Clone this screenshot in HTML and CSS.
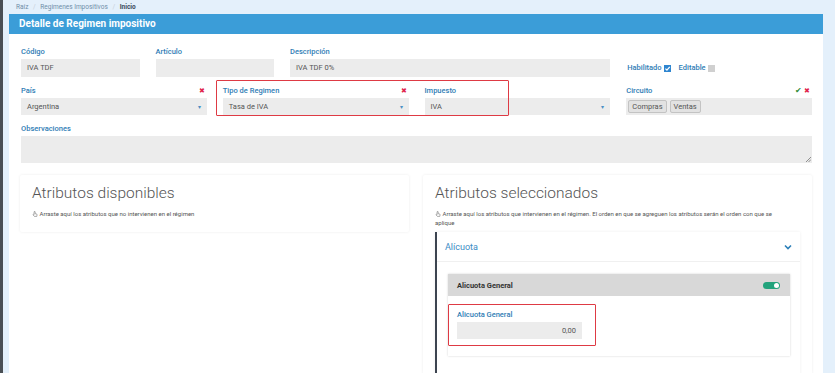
FILE: index.html
```html
<!DOCTYPE html>
<html lang="es">
<head>
    <meta charset="UTF-8">
    <title>Detalle de Regimen impositivo</title>
    <link rel="stylesheet" href="styles.css">
</head>
<body>
<div class="app">
    <div class="breadcrumb">
        <span class="crumb">Raíz</span>
        <span class="sep">/</span>
        <span class="crumb">Regimenes Impositivos</span>
        <span class="sep">/</span>
        <span class="crumb actual">Inicio</span>
    </div>

    <div class="panel">
        <div class="panel-title">Detalle de Regimen impositivo</div>
        <div class="panel-body">

            <div class="fila">
                <div class="campo span2">
                    <div class="etiqueta">Código</div>
                    <div class="entrada">IVA TDF</div>
                </div>
                <div class="campo span2">
                    <div class="etiqueta">Artículo</div>
                    <div class="entrada"></div>
                </div>
                <div class="campo span5">
                    <div class="etiqueta">Descripción</div>
                    <div class="entrada">IVA TDF 0%</div>
                </div>
                <div class="campo span3 checks">
                    <span class="etiqueta">Habilitado</span>
                    <span class="check marcado">
                        <svg width="7" height="7" viewBox="0 0 10 10"><path d="M2 5.2 L4.2 7.4 L8.2 2.6" fill="none" stroke="#fff" stroke-width="1.8"/></svg>
                    </span>
                    <span class="etiqueta editable">Editable</span>
                    <span class="check"></span>
                </div>
            </div>

            <div class="fila marca-contenedor">
                <div class="campo span3">
                    <div class="etiqueta linea">País <span class="quitar">✖</span></div>
                    <div class="entrada select">Argentina <span class="caret">▾</span></div>
                </div>
                <div class="campo span3">
                    <div class="etiqueta linea">Tipo de Regimen <span class="quitar">✖</span></div>
                    <div class="entrada select">Tasa de IVA <span class="caret">▾</span></div>
                </div>
                <div class="campo span3">
                    <div class="etiqueta linea">Impuesto</div>
                    <div class="entrada select">IVA <span class="caret">▾</span></div>
                </div>
                <div class="campo span3">
                    <div class="etiqueta linea">Circuito
                        <span class="acciones"><span class="ok">✔</span> <span class="quitar">✖</span></span>
                    </div>
                    <div class="entrada tags">
                        <span class="tag">Compras</span>
                        <span class="tag">Ventas</span>
                    </div>
                </div>
                <div class="marca marca-regimen"></div>
            </div>

            <div class="fila">
                <div class="campo span12">
                    <div class="etiqueta">Observaciones</div>
                    <div class="entrada area">
                        <svg class="grip" width="6" height="6" viewBox="0 0 6 6"><path d="M6 1 L1 6 M6 3.5 L3.5 6" stroke="#777" stroke-width="0.8"/></svg>
                    </div>
                </div>
            </div>

            <div class="atributos">
                <div class="tarjeta">
                    <h3>Atributos disponibles</h3>
                    <p class="ayuda">
                        <svg class="mano" width="6" height="6" viewBox="0 0 10 10"><path d="M3.5 6 V1.6 a0.9 0.9 0 0 1 1.8 0 V4.5 l2.4 0.6 a1 1 0 0 1 0.8 1.1 L8 9 H4 L1.8 6.6 a0.8 0.8 0 0 1 1.2 -1 Z" fill="none" stroke="#666" stroke-width="0.9"/></svg>
                        Arraste aquí los atributos que no intervienen en el régimen
                    </p>
                </div>

                <div class="tarjeta seleccionados">
                    <h3>Atributos seleccionados</h3>
                    <p class="ayuda">
                        <svg class="mano" width="6" height="6" viewBox="0 0 10 10"><path d="M3.5 6 V1.6 a0.9 0.9 0 0 1 1.8 0 V4.5 l2.4 0.6 a1 1 0 0 1 0.8 1.1 L8 9 H4 L1.8 6.6 a0.8 0.8 0 0 1 1.2 -1 Z" fill="none" stroke="#666" stroke-width="0.9"/></svg>
                        Arraste aquí los atributos que intervienen en el régimen. El orden en que se agreguen los atributos serán el orden con que se aplique
                    </p>

                    <div class="acordeon">
                        <div class="acordeon-cab">
                            <span>Alícuota</span>
                            <svg width="8" height="6" viewBox="0 0 8 6"><path d="M1 1.5 L4 4.5 L7 1.5" fill="none" stroke="#2b7fb8" stroke-width="1.6"/></svg>
                        </div>
                        <div class="acordeon-cuerpo">
                            <div class="subtarjeta">
                                <div class="subtarjeta-cab">
                                    <span>Alicuota General</span>
                                    <span class="interruptor"><span class="perilla"></span></span>
                                </div>
                                <div class="subtarjeta-cuerpo marca-contenedor">
                                    <div class="etiqueta">Alicuota General</div>
                                    <div class="entrada numero">0,00</div>
                                    <div class="marca marca-alicuota"></div>
                                </div>
                            </div>
                        </div>
                    </div>
                </div>
            </div>

        </div>
    </div>
</div>
</body>
</html>
```

FILE: styles.css
```css
body {
    margin: 0;
    font-family: Roboto, "Liberation Sans", Arial, sans-serif;
    background: #e4f0fb;
    height: 373px;
    overflow: hidden;
}

.app {
    border-left: 3px solid #4a4f55;
    padding-left: 6px;
    padding-right: 12px;
    height: 373px;
    box-sizing: border-box;
}

.breadcrumb {
    height: 14px;
    line-height: 14px;
    padding-left: 7px;
    font-size: 6.5px;
    color: #6f8ea8;
}

.sep {
    color: #c4cfd8;
    margin: 0 3px;
}

.crumb.actual {
    font-weight: bold;
    color: #3a4a5a;
}

.panel {
    background: #fff;
    height: 359px;
}

.panel-title {
    background: #3b9dd8;
    color: #fff;
    font-weight: bold;
    font-size: 10px;
    height: 20px;
    line-height: 20px;
    padding-left: 10px;
}

.panel-body {
    padding: 13px 11px 0 12px;
}

.fila {
    display: grid;
    grid-template-columns: repeat(12, 1fr);
    column-gap: 16px;
    margin-bottom: 9px;
}

.marca-contenedor {
    position: relative;
}

.span2 { grid-column: span 2; }
.span3 { grid-column: span 3; }
.span5 { grid-column: span 5; }
.span12 { grid-column: span 12; }

.etiqueta {
    font-size: 7.5px;
    font-weight: 500;
    color: #2f7db5;
    line-height: 10px;
    margin-bottom: 2px;
}

.etiqueta.linea {
    display: flex;
    justify-content: space-between;
    align-items: center;
}

.quitar {
    color: #e0244a;
    font-size: 7px;
    margin-right: 2px;
}

.ok {
    color: #2e8b3a;
    font-size: 8px;
}

.entrada {
    background: #ececec;
    height: 18px;
    line-height: 18px;
    font-size: 7.5px;
    color: #555;
    padding: 0 6px;
    box-sizing: border-box;
}

.select {
    height: 17px;
    line-height: 17px;
    display: flex;
    justify-content: space-between;
}

.caret {
    color: #4a8fc4;
    font-size: 6px;
}

.checks {
    display: flex;
    align-items: center;
    align-self: end;
    height: 18px;
}

.checks .etiqueta {
    margin: 0 2px 0 1px;
}

.checks .editable {
    margin-left: 8px;
}

.check {
    width: 7px;
    height: 7px;
    background: #d0d0d0;
    display: inline-flex;
    align-items: center;
    justify-content: center;
}

.check.marcado {
    background: #2f86d0;
}

.tags {
    height: 17px;
    display: flex;
    align-items: center;
    gap: 3px;
    padding: 0 2px;
}

.tag {
    border: 1px solid #c3c3c3;
    border-radius: 2px;
    background: #e2e2e2;
    line-height: 11px;
    padding: 0 3px;
    color: #555;
}

.marca {
    position: absolute;
    border: 1.5px solid #de3a44;
    border-radius: 1px;
}

.marca-regimen {
    left: 195px;
    top: -6px;
    width: 291px;
    height: 34px;
}

.area {
    height: 27px;
    position: relative;
}

.grip {
    position: absolute;
    right: 1px;
    bottom: 1px;
}

.atributos {
    display: flex;
    gap: 14px;
    margin-top: 12px;
    margin-left: -1px;
}

.tarjeta {
    width: 389px;
    height: 57px;
    box-sizing: border-box;
    padding: 9px 12px 0 12px;
    box-shadow: 0 0 3px rgba(0, 0, 0, 0.08);
    border-radius: 2px;
}

.tarjeta h3 {
    margin: 0;
    font-weight: 300;
    font-size: 15.5px;
    color: #555;
    line-height: 18px;
}

.ayuda {
    font-size: 6px;
    color: #555;
    margin: 7px 0 0 0;
    line-height: 9px;
}

.mano {
    vertical-align: -1px;
}

.seleccionados {
    height: 200px;
}

.seleccionados .ayuda {
    padding-right: 12px;
}

.acordeon {
    margin-top: 5px;
    border-left: 2px solid #3c4450;
    box-shadow: 0 0 3px rgba(0, 0, 0, 0.07);
    height: 150px;
}

.acordeon-cab {
    height: 29px;
    display: flex;
    align-items: center;
    justify-content: space-between;
    padding: 0 8px 0 8px;
    font-size: 9px;
    color: #3a8bc4;
    border-bottom: 1px solid #f0f0f0;
}

.acordeon-cuerpo {
    padding: 12px 10px 0 11px;
}

.subtarjeta {
    box-shadow: 0 0 2px rgba(0, 0, 0, 0.18);
}

.subtarjeta-cab {
    background: #d8d8d8;
    height: 22px;
    display: flex;
    align-items: center;
    justify-content: space-between;
    padding: 0 10px 0 9px;
    font-size: 7.5px;
    font-weight: bold;
    color: #333;
}

.interruptor {
    width: 17px;
    height: 7px;
    background: #22a37c;
    border-radius: 4px;
    position: relative;
}

.perilla {
    position: absolute;
    right: 1px;
    top: 1px;
    width: 5px;
    height: 5px;
    border-radius: 50%;
    background: #fff;
}

.subtarjeta-cuerpo {
    padding: 14px 9px 17px 9px;
}

.numero {
    width: 125px;
    height: 17px;
    line-height: 17px;
    text-align: right;
}

.marca-alicuota {
    left: 0;
    top: 8px;
    width: 146px;
    height: 40px;
}
```
